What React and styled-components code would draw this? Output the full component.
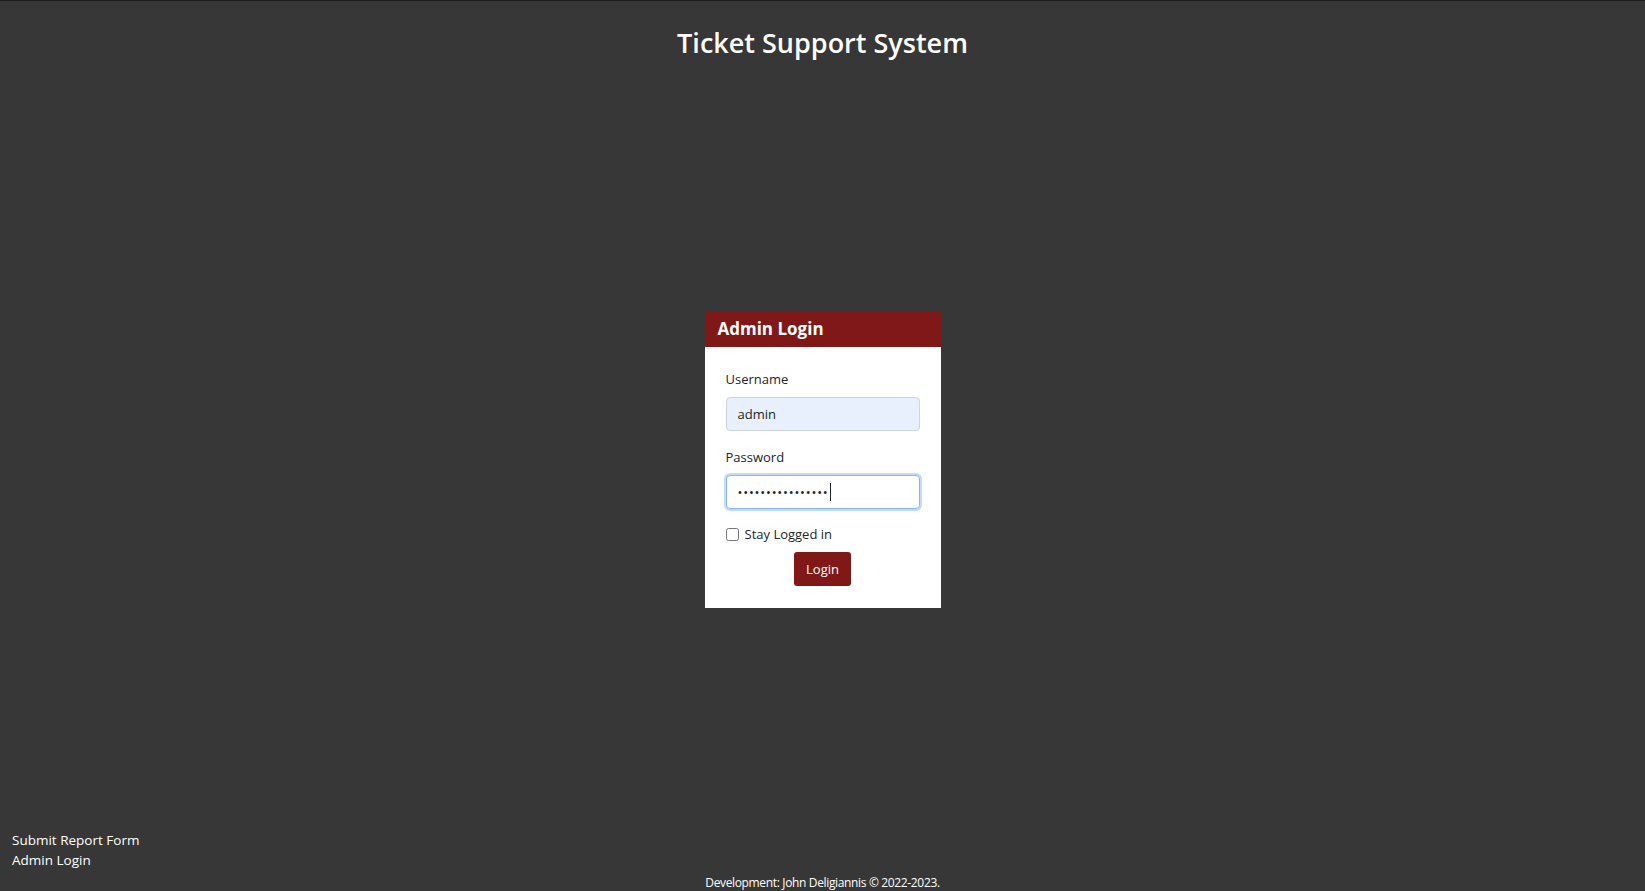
import styled, { createGlobalStyle } from "styled-components";

const GlobalStyle = createGlobalStyle`
  * { box-sizing: border-box; }
  body {
    margin: 0;
    background: #373737;
    font-family: "Open Sans", "Noto Sans", sans-serif;
  }
`;

const Page = styled.div`
  min-height: 100vh;
  display: flex;
  flex-direction: column;
  border-top: 1px solid #1c1c1c;
`;

const Header = styled.header`
  height: 88px;
  display: flex;
  justify-content: center;
  padding-top: 25px;
`;

const Title = styled.h1`
  margin: 0;
  font-size: 27px;
  line-height: 34px;
  font-weight: 600;
  color: #ffffff;
`;

const Main = styled.main`
  flex: 1;
  display: flex;
  align-items: center;
  justify-content: center;
`;

const Card = styled.div`
  width: 236px;
  background: #ffffff;
`;

const CardHeader = styled.div`
  height: 36px;
  background: #801818;
  color: #ffffff;
  font-size: 17px;
  font-weight: 700;
  line-height: 36px;
  padding-left: 13px;
`;

const Form = styled.form`
  display: flex;
  flex-direction: column;
  padding: 23px 21px 22px;
`;

const Label = styled.label`
  font-size: 13px;
  line-height: 18px;
  color: #212529;
  margin-top: ${(p) => p.$top || 0}px;
  margin-bottom: 9px;
`;

const Field = styled.div`
  position: relative;
`;

const Input = styled.input`
  width: 100%;
  height: 34px;
  padding: 0 11px;
  font-family: inherit;
  font-size: 13px;
  color: #212529;
  border-radius: 4px;
  outline: none;
  background: ${(p) => (p.$filled ? "#e8f0fe" : "#ffffff")};
  border: 1px solid ${(p) => (p.$focused ? "#86b7fe" : "#ced4da")};
  box-shadow: ${(p) => (p.$focused ? "0 0 0 2px rgba(13, 110, 253, 0.25)" : "none")};
  letter-spacing: ${(p) => (p.type === "password" ? "0.8px" : "0")};
`;

const Caret = styled.span`
  position: absolute;
  top: 8px;
  left: ${(p) => p.$left}px;
  width: 1px;
  height: 18px;
  background: #212529;
`;

const CheckRow = styled.label`
  display: flex;
  align-items: center;
  gap: 6px;
  margin-top: 16px;
  font-size: 13px;
  line-height: 18px;
  color: #212529;
`;

const Check = styled.input`
  margin: 0;
  width: 13px;
  height: 13px;
`;

const Button = styled.button`
  align-self: center;
  margin-top: 9px;
  width: 57px;
  height: 34px;
  border: none;
  border-radius: 3px;
  background: #801818;
  color: #ffffff;
  font-family: inherit;
  font-size: 13px;
  cursor: pointer;
`;

const Footer = styled.footer`
  display: flex;
  flex-direction: column;
`;

const Links = styled.nav`
  display: flex;
  flex-direction: column;
  padding-left: 12px;
`;

const FooterLink = styled.a`
  color: #ffffff;
  font-size: 13.5px;
  line-height: 20px;
  text-decoration: none;
  cursor: pointer;
`;

const Copy = styled.div`
  text-align: center;
  color: #ffffff;
  font-size: 12px;
  line-height: 16px;
  letter-spacing: -0.35px;
  margin-top: 5px;
`;

export default function App() {
  return (
    <>
      <GlobalStyle />
      <Page>
        <Header>
          <Title>Ticket Support System</Title>
        </Header>
        <Main>
          <Card>
            <CardHeader>Admin Login</CardHeader>
            <Form onSubmit={(e) => e.preventDefault()}>
              <Label htmlFor="username">Username</Label>
              <Input id="username" $filled defaultValue="admin" />
              <Label htmlFor="password" $top={17}>Password</Label>
              <Field>
                <Input id="password" type="password" $focused defaultValue="adminpassword123" />
                <Caret $left={104} />
              </Field>
              <CheckRow>
                <Check type="checkbox" />
                Stay Logged in
              </CheckRow>
              <Button type="submit">Login</Button>
            </Form>
          </Card>
        </Main>
        <Footer>
          <Links>
            <FooterLink>Submit Report Form</FooterLink>
            <FooterLink>Admin Login</FooterLink>
          </Links>
          <Copy>Development: John Deligiannis © 2022-2023.</Copy>
        </Footer>
      </Page>
    </>
  );
}
